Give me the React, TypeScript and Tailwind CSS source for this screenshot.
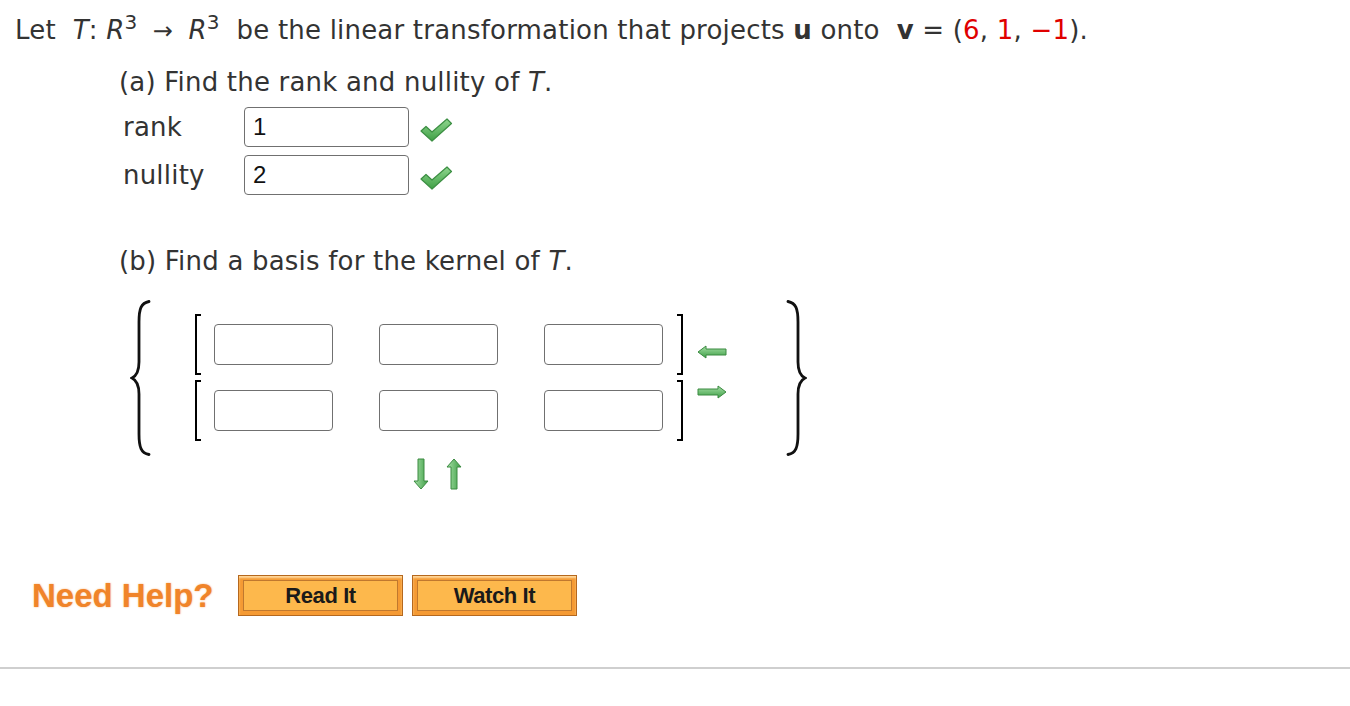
import React from "react";

function Check() {
  return (
    <svg width="34" height="26" viewBox="0 0 34 26" className="ml-[10px] mt-[10px]">
      <defs>
        <linearGradient id="chk" x1="0" y1="0" x2="0" y2="1">
          <stop offset="0" stopColor="#8fd68f" />
          <stop offset="1" stopColor="#3f9f45" />
        </linearGradient>
      </defs>
      <polygon points="2,14 7,9.5 13,15 28,2 32.5,6.5 13,24" fill="url(#chk)" stroke="#3c8f43" strokeWidth="1.2" strokeLinejoin="round" />
    </svg>
  );
}

function Arrow({ dir }: { dir: "left" | "right" | "up" | "down" }) {
  const horiz = dir === "left" || dir === "right";
  const w = horiz ? 30 : 16;
  const h = horiz ? 14 : 32;
  let pts = "";
  if (dir === "left") pts = "1,7 9,1 9,4 29,4 29,10 9,10 9,13";
  if (dir === "right") pts = "29,7 21,1 21,4 1,4 1,10 21,10 21,13";
  if (dir === "up") pts = "8,1 15,9 11,9 11,31 5,31 5,9 1,9";
  if (dir === "down") pts = "8,31 15,23 11,23 11,1 5,1 5,23 1,23";
  const gid = "ag-" + dir;
  return (
    <svg width={w} height={h} viewBox={`0 0 ${w} ${h}`}>
      <defs>
        <linearGradient id={gid} x1="0" y1="0" x2={horiz ? "0" : "1"} y2={horiz ? "1" : "0"}>
          <stop offset="0" stopColor="#a6e0a6" />
          <stop offset="1" stopColor="#3e9e46" />
        </linearGradient>
      </defs>
      <polygon points={pts} fill={`url(#${gid})`} stroke="#3a8a40" strokeWidth="1" strokeLinejoin="round" />
    </svg>
  );
}

function Brace({ flip }: { flip?: boolean }) {
  return (
    <svg width="22" height="156" viewBox="0 0 22 156" className={flip ? "-scale-x-100" : ""}>
      <path
        d="M19 1.5 C11 3, 9 9, 9 22 L9 62 C9 71, 6 76, 2 78 C6 80, 9 85, 9 94 L9 134 C9 147, 11 153, 19 154.5"
        fill="none"
        stroke="#111"
        strokeWidth="2.8"
        strokeLinecap="round"
      />
    </svg>
  );
}

function Box() {
  return <div className="h-[41px] w-[119px] rounded-[4px] border-[1.5px] border-[#707070] bg-white" />;
}

function MatrixRow() {
  return (
    <div className="flex items-center">
      <div className="h-[61px] w-[6px] border-y-2 border-l-2 border-black" />
      <div className="ml-[13px] flex gap-[46px]">
        <Box />
        <Box />
        <Box />
      </div>
      <div className="ml-[14px] h-[61px] w-[6px] border-y-2 border-r-2 border-black" />
    </div>
  );
}

function AnswerRow({ label, value, top }: { label: string; value: string; top: string }) {
  return (
    <div className={`flex h-[40px] items-start ${top}`}>
      <span className="w-[125px] pl-[4px] leading-[40px]">{label}</span>
      <div className="flex h-[40px] w-[165px] items-center rounded-[4px] border-[1.5px] border-[#707070] pl-[8px] font-['Liberation_Sans',Arial,sans-serif] text-[24px] tracking-normal text-[#111]">
        {value}
      </div>
      <Check />
    </div>
  );
}

function HelpButton({ label }: { label: string }) {
  return (
    <button className="h-[41px] w-[165px] border border-[#b5681e] bg-[#f59a33] p-[4px] shadow-[inset_0_2px_2px_#ffd79a]">
      <span className="flex h-full w-full items-center justify-center border border-[#c0782e] bg-[#fdb84c] font-['Liberation_Sans',Arial,sans-serif] text-[22px] font-bold tracking-[-0.4px] text-[#1a1a1a]">
        {label}
      </span>
    </button>
  );
}

export default function App() {
  return (
    <div className="min-h-[706px] bg-white font-['DejaVu_Sans',Verdana,sans-serif] text-[26px] tracking-[0.2px] text-[#333]">
      <p className="h-[60px] whitespace-pre pl-[15px] leading-[60px]">
        Let  <i>T</i>: <i>R</i>
        <sup className="text-[20px]">3</sup> <span className="inline-block w-[34px] text-center text-[24px]">→</span> <i>R</i>
        <sup className="text-[20px]">3</sup>  be the linear transformation that projects <b>u</b> onto  <b>v</b> = (
        <span className="text-[#e00000]">6</span>, <span className="text-[#e00000]">1</span>, <span className="text-[#e00000]">−1</span>).
      </p>

      <div className="pl-[119px]">
        <p className="mt-[6px] h-[32px] leading-[32px]">
          (a) Find the rank and nullity of <i>T</i>.
        </p>
        <AnswerRow label="rank" value="1" top="mt-[9px]" />
        <AnswerRow label="nullity" value="2" top="mt-[8px]" />

        <p className="mt-[50px] h-[32px] leading-[32px]">
          (b) Find a basis for the kernel of <i>T</i>.
        </p>

        <div className="ml-[11px] mt-[23px] flex items-start">
          <Brace />
          <div className="ml-[43px] mt-[14px] flex flex-col gap-[5px]">
            <MatrixRow />
            <MatrixRow />
          </div>
          <div className="ml-[14px] mt-[45px] flex flex-col gap-[26px]">
            <Arrow dir="left" />
            <Arrow dir="right" />
          </div>
          <div className="ml-[58px]">
            <Brace flip />
          </div>
        </div>

        <div className="ml-[294px] mt-[2px] flex gap-[17px]">
          <Arrow dir="down" />
          <Arrow dir="up" />
        </div>
      </div>

      <div className="mt-[81px] flex items-center pl-[32px]">
        <span className="w-[206px] font-['Liberation_Sans',Arial,sans-serif] text-[33px] font-bold tracking-normal text-[#f0842a] [text-shadow:0_0_2px_#f8b37a]">
          Need Help?
        </span>
        <div className="flex gap-[9px]">
          <HelpButton label="Read It" />
          <HelpButton label="Watch It" />
        </div>
      </div>

      <div className="mt-[46px] h-[2px] bg-[#cfcfcf]" />
    </div>
  );
}
